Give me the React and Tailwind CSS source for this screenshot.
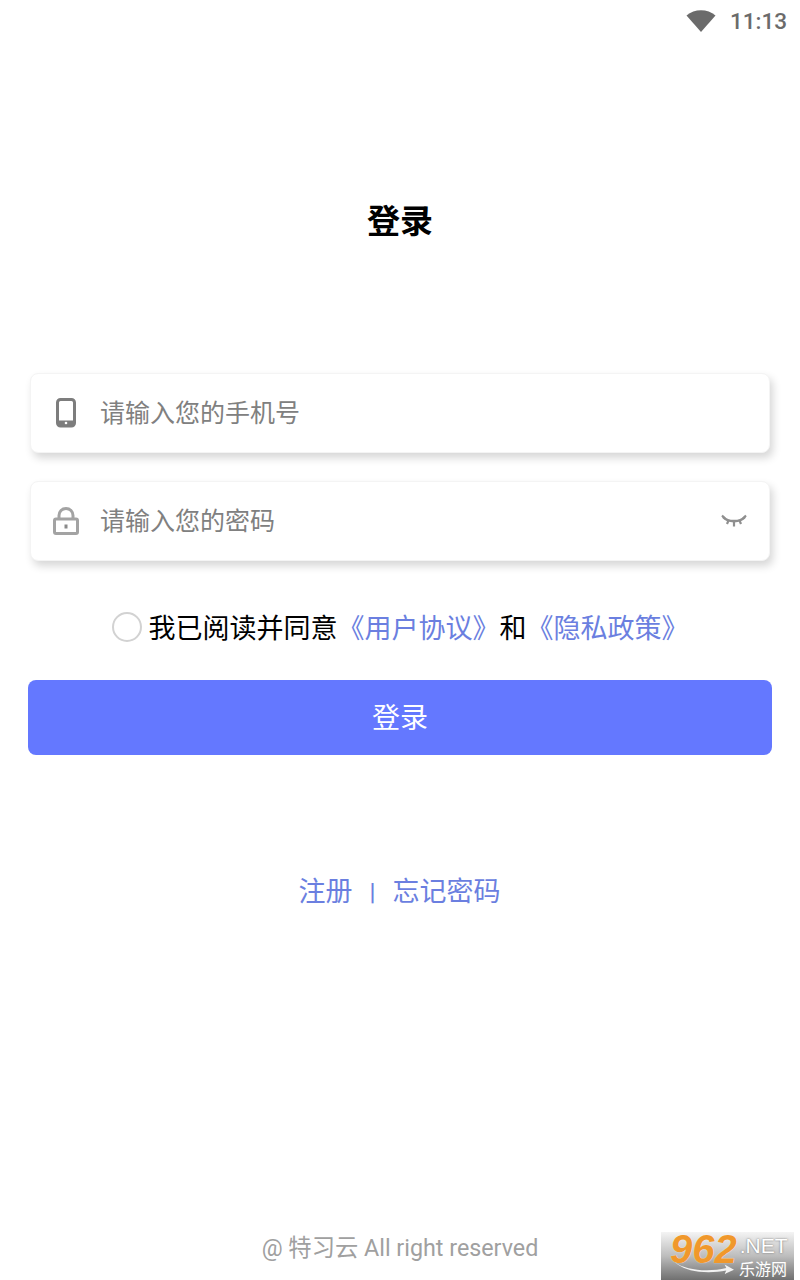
const cjk = "font-['Roboto','Noto_Sans_CJK_SC',sans-serif]";

function PhoneIcon() {
  return (
    <svg width="20" height="30" viewBox="0 0 20 30" fill="none">
      <rect x="1.5" y="1.5" width="17" height="26.5" rx="3" stroke="#7d7d7d" strokeWidth="3" />
      <rect x="2" y="22.5" width="16" height="5" fill="#7d7d7d" />
      <circle cx="10" cy="25" r="1.3" fill="#fff" />
    </svg>
  );
}

function LockIcon() {
  return (
    <svg width="26" height="28" viewBox="0 0 26 28" fill="none">
      <path d="M6 12V8.5C6 4.5 9 1.5 13 1.5S20 4.5 20 8.5V12" stroke="#a3a3a3" strokeWidth="3" />
      <rect x="1.5" y="12" width="23" height="14.5" rx="1.5" stroke="#a3a3a3" strokeWidth="3" />
      <rect x="11.5" y="17.5" width="3" height="4" fill="#8a8a8a" />
    </svg>
  );
}

function EyeIcon() {
  return (
    <svg width="26" height="14" viewBox="0 0 26 14" fill="none" stroke="#8f8f8f" strokeWidth="2.6">
      <path d="M2 3C7 8.5 19 8.5 24 3" />
      <path d="M1 1.5L4 4.5M25 1.5L22 4.5M7.5 6.5L6 10M18.5 6.5L20 10M13 8V12.5" strokeWidth="2.2" />
    </svg>
  );
}

function InputCard({ icon, placeholder, right }) {
  return (
    <div className="flex h-20 items-center rounded-lg border border-[#f4f4f4] bg-white shadow-[3px_5px_9px_rgba(0,0,0,0.16)]">
      <div className="flex w-[70px] justify-center">{icon}</div>
      <span className="-ml-px flex-1 text-[25px] leading-none text-[#808080]">{placeholder}</span>
      {right && <div className="mr-[22px] flex">{right}</div>}
    </div>
  );
}

function WatermarkLogo() {
  return (
    <div className="absolute bottom-0 right-[6px] h-[48px] w-[133px] bg-gradient-to-b from-[#f4f4f4] via-[#bdbdbd] to-[#707070] font-['Liberation_Sans','Noto_Sans_CJK_SC',sans-serif]">
      <div className="flex items-start pl-[9px]">
        <span className="text-[40px] font-bold italic leading-[34px] text-[#f0982c] [text-shadow:0_0_1px_#fff]">962</span>
        <span className="ml-[3px] mt-[2px] text-[21px] leading-[24px] text-white [text-shadow:0_0_2px_#666]">.NET</span>
      </div>
      <svg className="absolute bottom-[6px] left-[8px]" width="70" height="12" viewBox="0 0 72 14">
        <path d="M2 0C14 10 42 12 62 7L60 3L71 9L60 14L62 10C40 14 14 12 2 0Z" fill="#f2f2f2" />
      </svg>
      <div className="absolute bottom-[2px] right-[7px] text-[16px] leading-[16px] text-white">乐游网</div>
    </div>
  );
}

export default function App() {
  return (
    <div className={`relative flex h-[1280px] w-[800px] flex-col bg-white ${cjk}`}>
      <div className="flex h-[42px] items-center justify-end gap-[14px] pr-[13px] text-[#6b6b6b]">
        <svg className="mb-[3px]" width="30" height="24" viewBox="0 0 30 24">
          <path d="M0.5 7.5C8.5 0.5 21.5 0.5 29.5 7.5L15 24Z" fill="#6b6b6b" />
        </svg>
        <span className="text-[22.5px] font-medium leading-none">11:13</span>
      </div>

      <h1 className="mt-[159px] text-center text-[33px] font-bold leading-[42px] text-black">登录</h1>

      <div className="mt-[130px] flex flex-col gap-7 px-[30px]">
        <InputCard icon={<PhoneIcon />} placeholder="请输入您的手机号" />
        <InputCard icon={<LockIcon />} placeholder="请输入您的密码" right={<EyeIcon />} />
      </div>

      <div className="mt-[48px] flex h-9 items-center justify-center text-[27px] leading-none text-black">
        <span className="mr-[7px] h-[30px] w-[30px] rounded-full border-2 border-[#d2d2d2]" />
        <div className="flex pt-1">
          <span>我已阅读并同意</span>
          <span className="text-[#6b7fe0]">《用户协议》</span>
          <span>和</span>
          <span className="text-[#6b7fe0]">《隐私政策》</span>
        </div>
      </div>

      <div className="mx-7 mt-[35px] flex h-[75px] items-center justify-center rounded-lg bg-[#6478ff] pt-[2px] text-[28px] text-white">
        登录
      </div>

      <div className="mt-[119px] flex items-center justify-center pr-px text-[27px] leading-9 text-[#6b7fe0]">
        <span>注册</span>
        <span className="mx-[17px] font-medium text-[24px]">|</span>
        <span>忘记密码</span>
      </div>

      <div className="mt-[322px] text-center text-[23.3px] leading-8 text-[#a0a0a0]">@ 特习云 All right reserved</div>

      <WatermarkLogo />
    </div>
  );
}
